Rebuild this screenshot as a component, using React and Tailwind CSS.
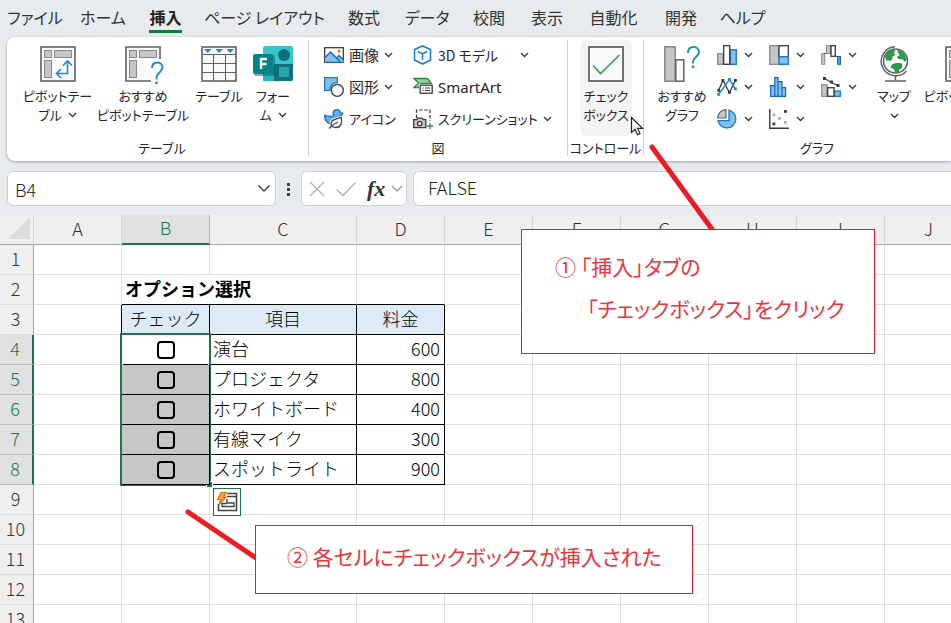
import clsx from 'clsx';

const TABS = [
    { label: 'ファイル', width: 'w-[70px]' },
    { label: 'ホーム', width: 'w-[66px]' },
    { label: '挿入', width: 'w-[59px]', active: true },
    { label: 'ページ レイアウト', width: 'w-[139px]' },
    { label: '数式', width: 'w-[60px]' },
    { label: 'データ', width: 'w-[66px]' },
    { label: '校閲', width: 'w-[58px]' },
    { label: '表示', width: 'w-[58px]' },
    { label: '自動化', width: 'w-[75px]' },
    { label: '開発', width: 'w-[60px]' },
    { label: 'ヘルプ', width: 'w-[63px]' },
];

const COLUMNS = [
    { name: 'A', width: 'w-[88px]' },
    { name: 'B', width: 'w-[88px]' },
    { name: 'C', width: 'w-[147px]' },
    { name: 'D', width: 'w-[88px]' },
    { name: 'E', width: 'w-[88px]' },
    { name: 'F', width: 'w-[88px]' },
    { name: 'G', width: 'w-[88px]' },
    { name: 'H', width: 'w-[88px]' },
    { name: 'I', width: 'w-[88px]' },
    { name: 'J', width: 'w-[88px]' },
];

const OPTIONS = [
    { item: '演台', price: 600 },
    { item: 'プロジェクタ', price: 800 },
    { item: 'ホワイトボード', price: 400 },
    { item: '有線マイク', price: 300 },
    { item: 'スポットライト', price: 900 },
];

const FIRST_OPTION_ROW = 4;
const LAST_OPTION_ROW = 8;
const ROWS = Array.from({ length: 13 }, (_, i) => i + 1);

/* ---------- Icons ---------- */

function Chevron({ className }) {
    return (
        <svg viewBox="0 0 9 6" className={clsx('h-[6px] w-[9px] shrink-0', className)} fill="none" stroke="#333" strokeWidth="1.3">
            <path d="M1 1l3.5 3.5L8 1" />
        </svg>
    );
}

function PivotFrame() {
    return (
        <g fill="#c8c6c4" stroke="#8a8886">
            <rect x="4.5" y="4.5" width="7" height="7" />
            <rect x="14.5" y="4.5" width="17" height="7" />
            <rect x="4.5" y="14.5" width="7" height="17" />
        </g>
    );
}

function PivotIcon() {
    return (
        <svg viewBox="0 0 36 36" className="size-9" fill="none">
            <rect x="1" y="1" width="34" height="34" fill="#fafafa" stroke="#616161" strokeWidth="1.6" />
            <PivotFrame />
            <path d="M17 27.5h10.5v-12M21 23l-4.5 4.5 4.5 4.5M23 19.5l4.5-4.5 4.5 4.5" stroke="#1e88d2" strokeWidth="1.6" />
        </svg>
    );
}

function RecommendedPivotIcon() {
    return (
        <svg viewBox="0 0 36 39" className="h-[39px] w-9 overflow-visible" fill="none">
            <path d="M25 35H1V1h34v12l-9 4-2 6 3 4z" fill="#fafafa" />
            <path d="M26 35H1V1h34v12" stroke="#616161" strokeWidth="1.6" />
            <PivotFrame />
            <path d="M27 22c0-3.5 2.2-5.5 5.3-5.5 3 0 5.2 2 5.2 4.8 0 5-6 5-6 10.7v1.5" stroke="#1e88d2" strokeWidth="1.9" />
            <rect x="30.3" y="35.5" width="2.4" height="2.5" fill="#1e88d2" />
        </svg>
    );
}

function TableIcon() {
    return (
        <svg viewBox="0 0 36 36" className="size-9" fill="none">
            <rect x="1" y="1" width="34" height="34" fill="#fafafa" stroke="#616161" strokeWidth="1.6" />
            <path d="M1 8.5h34M1 17.5h34M1 26.5h34M12.5 8.5V35M24.5 8.5V35" stroke="#616161" strokeWidth="1.1" />
            <path d="M3 3h7.5L6.800 7zM14.500 3H22l-3.800 4zM25.500 3H33l-3.800 4z" fill="#1e88d2" />
        </svg>
    );
}

function FormsIcon() {
    return (
        <svg viewBox="0 0 40 36" className="h-9 w-10">
            <rect x="10" y="0" width="30" height="35" rx="2" fill="#37c6d0" />
            <path d="M10 18h30v15a2 2 0 0 1-2 2H12a2 2 0 0 1-2-2z" fill="#12717a" />
            <path d="M10 18h11v17h-9a2 2 0 0 1-2-2z" fill="#26b4bd" />
            <circle cx="31" cy="9" r="6" fill="#0f7079" />
            <rect x="26" y="21" width="10" height="10" fill="#26a5ad" />
            <rect x="1" y="9" width="21" height="21" rx="2" fill="#0a5560" opacity=".5" />
            <rect x="0" y="8" width="20" height="20" rx="2" fill="#038387" />
            <path d="M8 23v-10h6M8 18h5.5" stroke="#fff" strokeWidth="2.4" fill="none" />
        </svg>
    );
}

function PictureIcon() {
    return (
        <svg viewBox="0 0 20 20" className="size-5" fill="none">
            <rect x=".7" y="2.7" width="18.6" height="14.6" fill="#fff" stroke="#3b3a39" strokeWidth="1.3" />
            <path d="M1 12.5l5.500-5.500 6 6 2.500-2.500 4.500 4.500v2.300H1z" fill="#83beec" />
            <path d="M1 12.5l5.500-5.500 9.500 9.500M12.500 13l2.500-2.500 4.500 4.500M1 17.300h18.500" stroke="#1568b5" strokeWidth="1.3" />
            <circle cx="15" cy="6" r="1.5" fill="#e8700a" />
        </svg>
    );
}

function ShapesIcon() {
    return (
        <svg viewBox="0 0 20 20" className="size-5">
            <path d="M.7.7h12.600v5A6.800 6.800 0 0 0 6 13.300H.7z" fill="#83beec" stroke="#1979ca" strokeWidth="1.3" />
            <circle cx="13.3" cy="13.3" r="6" fill="#fafafa" stroke="#3b3a39" strokeWidth="1.3" />
        </svg>
    );
}

function IconsIcon() {
    return (
        <svg viewBox="0 0 20 20" className="size-5" fill="none" strokeLinejoin="round">
            <path d="M.7 6c2.500 1.500 5 1.800 8.300 1.200l1-.7C8 4 9.500.7 12.500.7c2.300 0 3.800 1.300 3.800 3.300h2.500c-.3 2-1.500 2.800-3 3-1 3-3 6-8.800 8C3 14.500.3 11 .7 6z" fill="#62aee8" stroke="#1568b5" strokeWidth="1.2" />
            <path d="M17.300 8.500c1.200 5-.3 10-5.300 10-3 0-5-1.500-5-4 0-3.500 4.500-4.500 10.300-6z" fill="#fff" stroke="#fff" strokeWidth="3" />
            <path d="M17.300 8.500c1.200 5-.3 10-5.300 10-3 0-5-1.500-5-4 0-3.500 4.500-4.500 10.300-6z" fill="#fff" stroke="#444" strokeWidth="1.3" />
            <path d="M5 19.500c3-3.500 5.500-5 9-6.500" stroke="#444" strokeWidth="1.3" />
        </svg>
    );
}

function CubeIcon() {
    return (
        <svg viewBox="0 0 20 20" className="size-5" fill="none" stroke="#1979ca" strokeWidth="1.5" strokeLinejoin="round">
            <path d="M9.500 1l8 3.500v10.500l-8 4-8-4V4.500z" fill="#fafcff" />
            <path d="M5 6.500l4.500 2.300L14 6.500M9.500 8.800V15" />
        </svg>
    );
}

function SmartArtIcon() {
    return (
        <svg viewBox="0 0 20 20" className="size-5" fill="none">
            <path d="M1 1.500h13.500l4 5H8v4H1l4.500-4.500z" fill="#8fd19e" stroke="#2c8a45" strokeWidth="1.3" />
            <rect x="6" y="7" width="14" height="10" fill="#fff" />
            <rect x="7.2" y="8.2" width="12" height="8" fill="#fff" stroke="#3b3a39" strokeWidth="1.3" />
            <path d="M9.500 11h1.300M12 11h5M9.500 13.500h1.300M12 13.500h5" stroke="#3b3a39" strokeWidth="1.1" />
        </svg>
    );
}

function ScreenshotIcon() {
    return (
        <svg viewBox="0 0 20 20" className="size-5" fill="none">
            <path d="M3.500 9V1h13.500v11" stroke="#3b3a39" strokeWidth="1.2" strokeDasharray="3.5 1.8" />
            <path d="M.7 10.700h3l1-1.500h4.600l1 1.500h2.500v8H.7z" fill="#c8c6c4" stroke="#3b3a39" strokeWidth="1.3" />
            <circle cx="6.7" cy="14.5" r="2.2" fill="#fff" stroke="#3b3a39" strokeWidth="1.3" />
            <path d="M17 14v6M14 17h6" stroke="#21a050" strokeWidth="1.5" />
        </svg>
    );
}

function CheckboxIcon() {
    return (
        <svg viewBox="0 0 36 36" className="size-9" fill="none">
            <rect x="1" y="1" width="34" height="34" fill="#fafafa" stroke="#616161" strokeWidth="1.8" />
            <path d="M5 19.500l7.500 8L31.500 9" stroke="#35a355" strokeWidth="1.7" />
        </svg>
    );
}

function RecommendedChartIcon() {
    return (
        <svg viewBox="0 0 36 36" className="size-9" fill="none">
            <rect x=".8" y=".8" width="10.4" height="34.4" fill="#c8c6c4" stroke="#8a8886" strokeWidth="1.5" />
            <rect x="11.8" y="13.8" width="8" height="21.4" fill="#fafafa" stroke="#616161" strokeWidth="1.5" />
            <path d="M24 7c0-3.700 2.200-6 5.600-6 3.200 0 5.400 2 5.400 5 0 5-6 5-6 10v1.500" stroke="#1e88d2" strokeWidth="1.9" />
            <rect x="27.8" y="19.5" width="2.4" height="2.5" fill="#1e88d2" />
        </svg>
    );
}

function ColumnChartIcon() {
    return (
        <svg viewBox="0 0 20 20" className="size-5">
            <rect x=".7" y="8.7" width="5.6" height="10.6" fill="#c8c6c4" stroke="#8a8886" strokeWidth="1.3" />
            <rect x="13.3" y="4.7" width="6" height="14.6" fill="#83beec" stroke="#1979ca" strokeWidth="1.3" />
            <rect x="6.7" y=".7" width="6" height="18.6" fill="#fff" stroke="#3b3a39" strokeWidth="1.3" />
        </svg>
    );
}

function HierarchyChartIcon() {
    return (
        <svg viewBox="0 0 20 20" className="size-5">
            <rect x=".7" y=".7" width="9.3" height="18.6" fill="#c8c6c4" stroke="#8a8886" strokeWidth="1.3" />
            <rect x="10" y=".7" width="9.3" height="11" fill="#fff" stroke="#3b3a39" strokeWidth="1.3" />
            <rect x="10" y="11.7" width="9.3" height="7.6" fill="#83beec" stroke="#1979ca" strokeWidth="1.3" />
        </svg>
    );
}

function WaterfallChartIcon() {
    return (
        <svg viewBox="0 0 20 20" className="size-5">
            <rect x=".7" y="8.7" width="3" height="10.6" fill="#c8c6c4" stroke="#8a8886" />
            <path d="M3.500 8.500h2M14.300 11.300h2.200" stroke="#3b3a39" />
            <rect x="5.5" y=".7" width="4" height="7.8" fill="#c8c6c4" stroke="#8a8886" />
            <rect x="10" y=".7" width="4.3" height="10.6" fill="#fff" stroke="#3b3a39" strokeWidth="1.3" />
            <rect x="16.5" y="11.5" width="3" height="7.8" fill="#4b9fe0" stroke="#1568b5" />
        </svg>
    );
}

function LineChartIcon() {
    return (
        <svg viewBox="0 0 20 20" className="size-5" fill="none">
            <path d="M1.500 13.500L6 3.500l6.500 12L18.500 3" stroke="#3b3a39" strokeWidth="1.3" />
            <path d="M1.500 17.500L12.500 2.500l6 9.500" stroke="#1e88d2" strokeWidth="1.5" />
            <g fill="#3b3a39"><rect x=".3" y="12" width="2.8" height="2.8" /><rect x="4.5" y="2" width="2.8" height="2.8" /><rect x="11" y="14" width="2.8" height="2.8" /><rect x="17" y="2" width="2.8" height="2.8" /></g>
            <g fill="#1e88d2"><rect x=".3" y="16" width="2.8" height="2.8" /><rect x="11" y="1" width="2.8" height="2.8" /><rect x="17" y="10.5" width="2.8" height="2.8" /></g>
        </svg>
    );
}

function HistogramIcon() {
    return (
        <svg viewBox="0 0 20 20" className="size-5" fill="#83beec" stroke="#1568b5" strokeWidth="1.2">
            <path d="M1.600 19.300V8.600h4.200v10.700zM5.800 19.300V.7H9v18.600zM9 19.300V4.600h4v14.700zM13 19.300v-8.600h3.600v8.600z" />
        </svg>
    );
}

function ComboChartIcon() {
    return (
        <svg viewBox="0 0 20 20" className="size-5" fill="none">
            <rect x=".7" y="7.7" width="5.3" height="11.6" fill="#c8c6c4" stroke="#8a8886" strokeWidth="1.2" />
            <rect x="13.5" y="14" width="5.8" height="5.3" fill="#83beec" stroke="#1979ca" strokeWidth="1.3" />
            <rect x="6.7" y="10.7" width="6.3" height="8.6" fill="#fff" stroke="#3b3a39" strokeWidth="1.3" />
            <path d="M3.500 1.500l7 4 6.500 3" stroke="#3b3a39" strokeWidth="1.2" />
            <g fill="#3b3a39"><rect x="2" y="0" width="3" height="3" /><rect x="9" y="3.5" width="3" height="3" /><rect x="15.5" y="7" width="3" height="3" /></g>
        </svg>
    );
}

function PieChartIcon() {
    return (
        <svg viewBox="0 0 20 20" className="size-5">
            <path d="M12 1.200a9 9 0 1 1-11 10.500h11z" fill="#83beec" stroke="#1979ca" strokeWidth="1.3" />
            <path d="M9 .7v8.300H.7a8.300 8.300 0 0 1 8.300-8.300z" fill="#c8c6c4" stroke="#616161" strokeWidth="1.2" />
        </svg>
    );
}

function ScatterChartIcon() {
    return (
        <svg viewBox="0 0 20 20" className="size-5">
            <path d="M.8 0v19.200H20" fill="none" stroke="#3b3a39" strokeWidth="1.4" />
            <g fill="#3b3a39"><rect x="3.5" y="13.5" width="2.8" height="2.8" /><rect x="15" y="1" width="2.8" height="2.8" /></g>
            <g fill="#83beec"><rect x="3.5" y="4.5" width="2.8" height="2.8" /><rect x="9" y="8" width="2.8" height="2.8" /><rect x="15" y="12" width="2.8" height="2.8" /></g>
        </svg>
    );
}

function MapIcon() {
    return (
        <svg viewBox="0 0 30 36" className="h-9 w-[30px]" fill="none">
            <circle cx="16.5" cy="15" r="12" fill="#fafafa" stroke="#616161" strokeWidth="1.5" />
            <path d="M6 10.500c1.500-3.500 4-6 8-7l2.500 1-1.500 2 1 3-2.500 1-.5 3-2 1.500-2.500-1-1 1.500zM18 4l4.500 1 3.500 4 1.500 4-1 3-3.500-3h-4l-1-2.500 2.500-1-1-2zM13 18.500l4-1.500h5l1.500 2-1 3.500-2.500 1v2.500l-4 .5-1-3.500-3.500-1.500z" fill="#2b9a48" />
            <path d="M16 .8A14.500 14.500 0 1 0 27.500 25M16.500 30v4M6 35h21" stroke="#616161" strokeWidth="1.5" />
        </svg>
    );
}

function PivotChartIcon() {
    return (
        <svg viewBox="0 0 36 36" className="size-9" fill="none">
            <rect x="1" y="1" width="34" height="34" fill="#fafafa" stroke="#616161" strokeWidth="1.6" />
            <PivotFrame />
        </svg>
    );
}

/* ---------- Ribbon ---------- */

function BigButton({ icon, lines, menu, menuBelow, className, selected }) {
    return (
        <button className={clsx('flex h-24 shrink-0 flex-col items-center rounded-md pt-[6px] text-[13px] leading-[19px]', className, selected && 'bg-[#f3f3f3]')}>
            <span className="mb-1 flex h-9 items-start justify-center">{icon}</span>
            {lines.map((line, i) => (
                <span key={line} className="flex items-center gap-[6px] whitespace-nowrap">
                    {line}
                    {menu && i === lines.length - 1 && <Chevron />}
                </span>
            ))}
            {menuBelow && <Chevron className="mt-2" />}
        </button>
    );
}

function SmallButton({ icon, label, menu, className }) {
    return (
        <button className={clsx('flex h-8 items-center whitespace-nowrap pb-[2px]', className)}>
            {icon}
            <span className="ml-[5px] flex-1 text-left">{label}</span>
            {menu && <Chevron className="ml-[5px]" />}
        </button>
    );
}

function ChartButton({ icon, label }) {
    return (
        <button aria-label={label} className="flex h-8 items-center gap-[7px] pb-[2px]">
            {icon}
            <Chevron />
        </button>
    );
}

function Group({ label, className, children }) {
    return (
        <section className={clsx('flex shrink-0 flex-col border-r border-[#d1d1d1]', className)}>
            <div className="flex h-[100px]">{children}</div>
            <h2 className="whitespace-nowrap text-center text-[13px] leading-4">{label}</h2>
        </section>
    );
}

function Ribbon() {
    return (
        <div className="ml-[7px] flex h-[124px] overflow-hidden rounded-l-lg bg-white pb-[5px] pt-[3px] text-[#262626] shadow-[0_1px_3px_rgba(0,0,0,0.3)]">
            <Group label="テーブル" className="w-[302px] pl-[9px]">
                <BigButton icon={<PivotIcon />} lines={['ピボットテー', 'ブル']} menu className="w-[83px]" />
                <BigButton icon={<RecommendedPivotIcon />} lines={['おすすめ', 'ピボットテーブル']} className="w-[88px]" />
                <BigButton icon={<TableIcon />} lines={['テーブル']} className="w-16" />
                <BigButton icon={<FormsIcon />} lines={['フォー', 'ム']} menu className="w-11" />
            </Group>
            <Group label="図" className="w-[259px]">
                <div className="ml-[15px] flex w-[89px] flex-col items-start">
                    <SmallButton icon={<PictureIcon />} label="画像" menu className="text-[15px]" />
                    <SmallButton icon={<ShapesIcon />} label="図形" menu className="text-[15px]" />
                    <SmallButton icon={<IconsIcon />} label="アイコン" className="text-[13px]" />
                </div>
                <div className="flex flex-col items-start">
                    <SmallButton icon={<CubeIcon />} label="3D モデル" menu className="w-[116px] text-sm" />
                    <SmallButton icon={<SmartArtIcon />} label="SmartArt" className="font-['Noto_Sans',sans-serif] text-[15px]" />
                    <SmallButton icon={<ScreenshotIcon />} label="スクリーンショット" menu className="text-[13px]" />
                </div>
            </Group>
            <Group label="コントロール" className="w-[76px]">
                <BigButton icon={<CheckboxIcon />} lines={['チェック', 'ボックス']} className="ml-3 w-[52px]" selected />
            </Group>
            <Group label="グラフ" className="w-[347px]">
                <BigButton icon={<RecommendedChartIcon />} lines={['おすすめ', 'グラフ']} className="ml-2 w-[60px]" />
                <div className="ml-[5px] grid h-24 w-[156px] shrink-0 grid-cols-3">
                    <ChartButton icon={<ColumnChartIcon />} label="縦棒" />
                    <ChartButton icon={<HierarchyChartIcon />} label="階層構造" />
                    <ChartButton icon={<WaterfallChartIcon />} label="ウォーターフォール" />
                    <ChartButton icon={<LineChartIcon />} label="折れ線" />
                    <ChartButton icon={<HistogramIcon />} label="統計" />
                    <ChartButton icon={<ComboChartIcon />} label="複合" />
                    <ChartButton icon={<PieChartIcon />} label="円" />
                    <ChartButton icon={<ScatterChartIcon />} label="散布図" />
                </div>
                <BigButton icon={<MapIcon />} lines={['マップ']} menuBelow className="w-[42px]" />
                <BigButton icon={<PivotChartIcon />} lines={['ピボットグラフ']} className="ml-2 w-20" />
            </Group>
        </div>
    );
}

/* ---------- Formula bar ---------- */

function FormulaBar() {
    return (
        <div className="flex h-[54px] items-start gap-[6px] pl-[7px] pt-[10px] font-light text-[#222]">
            <div className="flex h-[35px] w-[269px] items-center rounded-md border border-[#d0d0d0] bg-white pl-[7px] pr-1">
                <input aria-label="名前ボックス" defaultValue="B4" className="min-w-0 flex-1 bg-transparent text-lg leading-6 outline-none" />
                <button aria-label="名前の一覧">
                    <svg viewBox="0 0 14 9" className="h-[9px] w-[14px]" fill="none" stroke="#444" strokeWidth="1.5">
                        <path d="M1.500 1.500L7 7l5.500-5.500" />
                    </svg>
                </button>
            </div>
            <svg viewBox="0 0 13 35" className="h-[35px] w-[13px]" fill="#444">
                <rect x="5" y="12" width="3" height="3" />
                <rect x="5" y="17" width="3" height="3" />
                <rect x="5" y="22" width="3" height="3" />
            </svg>
            <div className="flex h-[35px] w-[106px] items-center gap-[10px] rounded-md border border-[#d0d0d0] bg-white pl-[7px]">
                <button aria-label="キャンセル">
                    <svg viewBox="0 0 16 16" className="size-4" fill="none" stroke="#b0b0b0" strokeWidth="1.3">
                        <path d="M1 1l14 14M15 1L1 15" />
                    </svg>
                </button>
                <button aria-label="入力">
                    <svg viewBox="0 0 22 16" className="h-4 w-[22px]" fill="none" stroke="#b0b0b0" strokeWidth="1.3">
                        <path d="M1.500 8.500L8 14.500 20.500 1.500" />
                    </svg>
                </button>
                <button className="font-['Liberation_Serif',serif] text-[22px] font-bold italic leading-6 text-[#333]">fx</button>
                <svg viewBox="0 0 12 8" className="-ml-1 h-2 w-3 shrink-0" fill="none" stroke="#999" strokeWidth="1.3">
                    <path d="M1 1l5 5 5-5" />
                </svg>
            </div>
            <input
                aria-label="数式バー"
                defaultValue="FALSE"
                className="h-[35px] min-w-0 flex-1 rounded-l-md border border-r-0 border-[#d0d0d0] bg-white pb-1 pl-[14px] text-lg leading-6 outline-none"
            />
        </div>
    );
}

/* ---------- Sheet ---------- */

function Selection() {
    return (
        <>
            <div className="pointer-events-none absolute -left-[2px] -top-[2px] h-[153px] w-[91px] border-2 border-[#217346] shadow-[inset_0_0_0_1px_#fff]" />
            <div className="absolute left-[84px] top-[146px] size-[7px] border border-white bg-[#217346]" />
            <button aria-label="クイック分析" className="absolute left-[91px] top-[153px] z-10 flex size-7 items-center justify-center border border-[#217346] bg-white">
                <svg viewBox="0 0 22 22" className="size-[22px]" fill="none">
                    <path d="M11 2.500h9.500v17h-18V13" stroke="#444" strokeWidth="1.6" />
                    <path d="M11 5.500h9M11 8v4h7v3.500H6V12.500h5" stroke="#444" strokeWidth="1.4" />
                    <path d="M5 1.500h5L7.500 6H10l-7 7.500L4.500 8.500H1.500z" fill="#f7a540" stroke="#e36c09" strokeWidth="1.2" />
                </svg>
            </button>
        </>
    );
}

function OptionCells({ row }) {
    const option = OPTIONS[row - FIRST_OPTION_ROW];
    const first = row === FIRST_OPTION_ROW;
    return (
        <>
            <td className={clsx('relative border-b border-r border-black', first ? 'bg-white' : 'bg-[#c6c6c6]')}>
                <input
                    type="checkbox"
                    aria-label={option.item}
                    className="mx-auto block size-[18px] appearance-none rounded-[4px] border-2 border-black checked:bg-black"
                />
                {first && <Selection />}
            </td>
            <td className="border-b border-r border-black pb-[3px] pl-[3px]">{option.item}</td>
            <td className="border-b border-r border-black pb-[3px] pr-1 text-right">{option.price}</td>
        </>
    );
}

function RowCells({ row }) {
    const grid = 'border-b border-r border-[#dfdfdf]';
    const rest = COLUMNS.slice(4).map((col) => <td key={col.name} className={grid} />);

    if (row === 2) {
        return (
            <>
                <td className={grid} />
                <td colSpan={2} className="border-b border-r border-b-black border-r-[#dfdfdf] pb-[3px] pl-[3px] font-bold">オプション選択</td>
                <td className="border-b border-r border-b-black border-r-[#dfdfdf]" />
                {rest}
            </>
        );
    }
    if (row === 3) {
        return (
            <>
                <td className="border-b border-r border-b-[#dfdfdf] border-r-black" />
                {['チェック', '項目', '料金'].map((label) => (
                    <th key={label} className="border-b border-r border-black bg-[#ddebf7] font-light">{label}</th>
                ))}
                {rest}
            </>
        );
    }
    if (row >= FIRST_OPTION_ROW && row <= LAST_OPTION_ROW) {
        return (
            <>
                <td className="border-b border-r border-b-[#dfdfdf] border-r-black" />
                <OptionCells row={row} />
                {rest}
            </>
        );
    }
    return COLUMNS.map((col) => <td key={col.name} className={grid} />);
}

function Sheet() {
    return (
        <div className="min-h-0 flex-1 overflow-hidden bg-white">
            <table className="w-[971px] table-fixed border-separate border-spacing-0 text-lg font-light leading-[25px] text-black [&_th]:pb-[3px]">
                <colgroup>
                    <col className="w-[34px]" />
                    {COLUMNS.map((col) => <col key={col.name} className={col.width} />)}
                </colgroup>
                <thead>
                    <tr className="h-[30px] bg-[#efefef] text-[#333]">
                        <th className="border-b border-r border-b-[#a6a6a6] border-r-[#d6d6d6]">
                            <svg viewBox="0 0 22 22" className="ml-2 size-[22px]">
                                <path d="M22 0v22H0z" fill="#dcdcdc" />
                            </svg>
                        </th>
                        {COLUMNS.map((col) => (
                            <th
                                key={col.name}
                                scope="col"
                                className={clsx(
                                    'font-light',
                                    col.name === 'B'
                                        ? 'border-b-2 border-r border-b-[#217346] border-r-[#b5b5b5] bg-[#e0e0e0] text-[#217346]'
                                        : 'border-b border-r border-b-[#a6a6a6] border-r-[#d6d6d6]'
                                )}
                            >
                                {col.name}
                            </th>
                        ))}
                    </tr>
                </thead>
                <tbody>
                    {ROWS.map((row) => (
                        <tr key={row} className="h-[30px]">
                            <th
                                scope="row"
                                className={clsx(
                                    'border-b pr-[2px] font-light',
                                    row >= FIRST_OPTION_ROW && row <= LAST_OPTION_ROW
                                        ? 'border-r-2 border-b-[#bdbdbd] border-r-[#217346] bg-[#e0e0e0] text-[#217346]'
                                        : 'border-r border-b-[#dcdcdc] border-r-[#a6a6a6] bg-[#efefef] text-[#333]'
                                )}
                            >
                                {row}
                            </th>
                            <RowCells row={row} />
                        </tr>
                    ))}
                </tbody>
            </table>
        </div>
    );
}

/* ---------- Callouts ---------- */

function Callouts() {
    return (
        <div className="text-[21px] leading-[42px] text-[#f0323a] [font-feature-settings:'palt']">
            <svg viewBox="0 0 72 92" className="absolute left-[646px] top-[142px] h-[92px] w-[72px]">
                <path d="M6 5l62 85" stroke="#ed1c24" strokeWidth="5" strokeLinecap="round" />
            </svg>
            <svg viewBox="0 0 80 56" className="absolute left-[183px] top-[507px] h-14 w-20">
                <path d="M5 5l71 48" stroke="#ed1c24" strokeWidth="5" strokeLinecap="round" />
            </svg>
            <div className="absolute left-[521px] top-[229px] h-[125px] w-[354px] whitespace-nowrap border border-[#ed1c24] bg-white pl-[33px] pt-[15px]">
                <p>① 「挿入」タブの</p>
                <p className="pl-8">「チェックボックス」をクリック</p>
            </div>
            <div className="absolute left-[255px] top-[525px] flex h-[69px] w-[438px] items-center whitespace-nowrap border border-[#ed1c24] bg-white pb-2 pl-[31px]">
                <p>② 各セルにチェックボックスが挿入された</p>
            </div>
            <svg viewBox="0 0 14 20" className="absolute left-[630px] top-[116px] h-5 w-[14px]">
                <path d="M1.500 1.500v15l3.500-3.200 2.500 5.500 2.500-1.200-2.500-5.300h5z" fill="#fff" stroke="#222" strokeWidth="1.2" />
            </svg>
        </div>
    );
}

export default function App() {
    return (
        <div className="relative flex h-screen flex-col overflow-hidden bg-[#e7ebee] font-['Noto_Sans_CJK_JP',sans-serif]">
            <div className="[font-feature-settings:'palt']">
                <nav className="flex h-[37px] text-base leading-[34px] text-[#333]">
                    {TABS.map((tab) => (
                        <button key={tab.label} className={clsx('flex shrink-0 justify-center whitespace-nowrap', tab.width)}>
                            <span className={clsx('h-[33px]', tab.active && 'border-b-3 border-[#107c41] font-bold text-[#222]')}>{tab.label}</span>
                        </button>
                    ))}
                </nav>
                <Ribbon />
            </div>
            <FormulaBar />
            <Sheet />
            <Callouts />
        </div>
    );
}
